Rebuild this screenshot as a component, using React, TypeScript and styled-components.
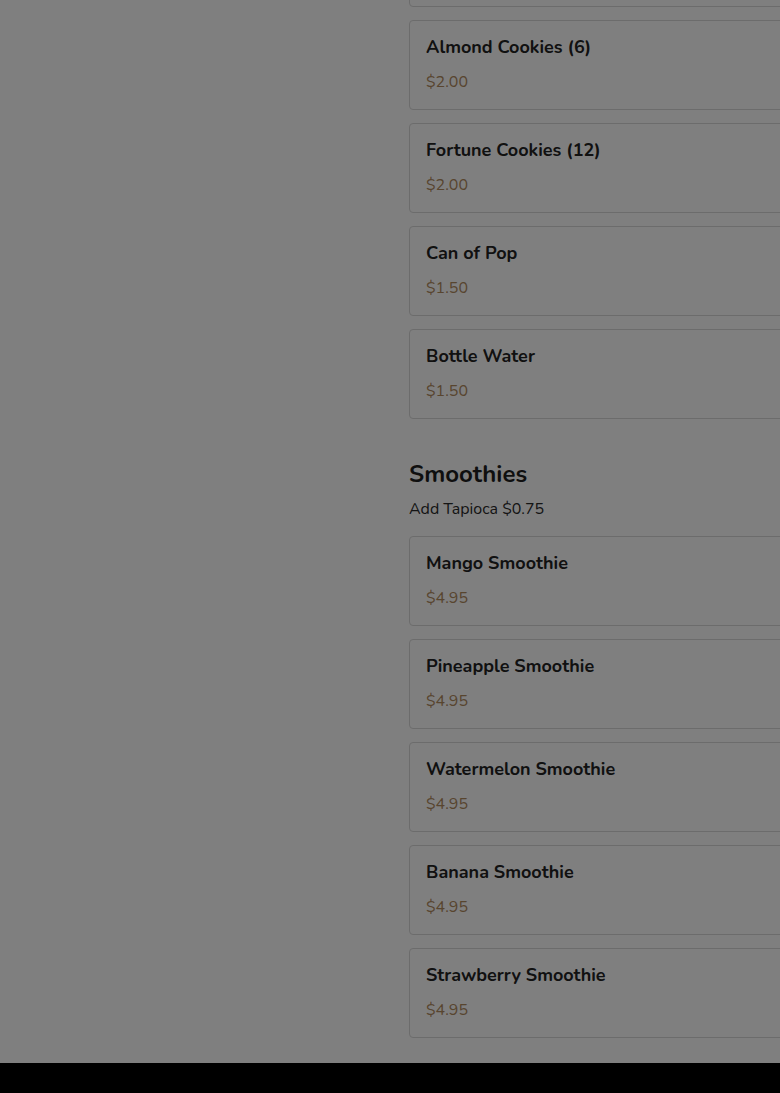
import React from 'react';
import styled, { createGlobalStyle } from 'styled-components';

const GlobalStyle = createGlobalStyle`
  html, body {
    margin: 0;
    padding: 0;
    overflow: hidden;
    background: #ffffff;
  }
  body {
    font-family: 'Nunito', 'Lato', 'Open Sans', sans-serif;
  }
`;

const Page = styled.div`
  height: 1093px;
  display: flex;
  flex-direction: column;
  overflow: hidden;
`;

const Menu = styled.main`
  flex: 1;
  overflow: hidden;
  padding-left: 409px;
`;

const Column = styled.div`
  width: 640px;
  margin-top: -83px;
  display: flex;
  flex-direction: column;
`;

const Section = styled.section`
  display: flex;
  flex-direction: column;
  margin-bottom: 39px;
`;

const SectionTitle = styled.h2`
  margin: 0;
  font-size: 24px;
  line-height: 32px;
  font-weight: 700;
  color: #1e1e1e;
`;

const SectionNote = styled.p`
  margin: 8px 0 16px;
  font-size: 16px;
  line-height: 22px;
  color: #2a2a2a;
`;

const ItemList = styled.div`
  display: flex;
  flex-direction: column;
  gap: 13px;
`;

const ItemCard = styled.div`
  border: 1px solid #d8d8d8;
  border-radius: 4px;
  padding: 16px;
  display: flex;
  flex-direction: column;
  gap: 14px;
`;

const ItemName = styled.div`
  font-size: 18px;
  line-height: 20px;
  font-weight: 700;
  color: #222;
`;

const ItemPrice = styled.div`
  font-size: 16px;
  line-height: 22px;
  color: #b08a5e;
`;

const Footer = styled.footer`
  height: 30px;
  background: #000;
  flex-shrink: 0;
`;

const Backdrop = styled.div`
  position: fixed;
  inset: 0;
  background: rgba(0, 0, 0, 0.5);
`;

type Item = { name: string; price: string };

const sections: { title?: string; note?: string; items: Item[] }[] = [
  {
    items: [
      { name: 'Egg Rolls (2)', price: '$3.00' },
      { name: 'Almond Cookies (6)', price: '$2.00' },
      { name: 'Fortune Cookies (12)', price: '$2.00' },
      { name: 'Can of Pop', price: '$1.50' },
      { name: 'Bottle Water', price: '$1.50' },
    ],
  },
  {
    title: 'Smoothies',
    note: 'Add Tapioca $0.75',
    items: [
      { name: 'Mango Smoothie', price: '$4.95' },
      { name: 'Pineapple Smoothie', price: '$4.95' },
      { name: 'Watermelon Smoothie', price: '$4.95' },
      { name: 'Banana Smoothie', price: '$4.95' },
      { name: 'Strawberry Smoothie', price: '$4.95' },
    ],
  },
];

const App: React.FC = () => (
  <>
    <GlobalStyle />
    <Page>
      <Menu>
        <Column>
          {sections.map((section, i) => (
            <Section key={i}>
              {section.title && <SectionTitle>{section.title}</SectionTitle>}
              {section.note && <SectionNote>{section.note}</SectionNote>}
              <ItemList>
                {section.items.map((item) => (
                  <ItemCard key={item.name}>
                    <ItemName>{item.name}</ItemName>
                    <ItemPrice>{item.price}</ItemPrice>
                  </ItemCard>
                ))}
              </ItemList>
            </Section>
          ))}
        </Column>
      </Menu>
      <Footer />
    </Page>
    <Backdrop />
  </>
);

export default App;
